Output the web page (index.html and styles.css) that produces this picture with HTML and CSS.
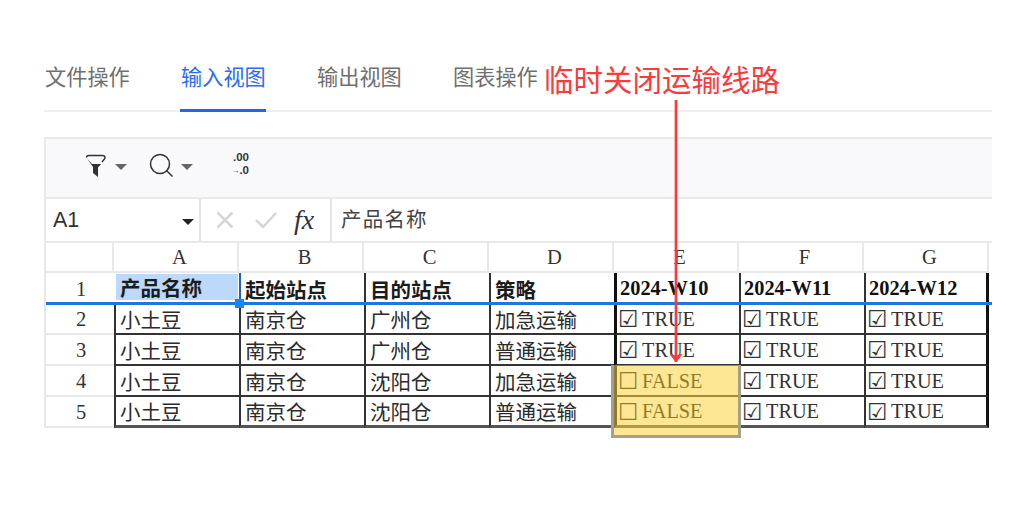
FILE: index.html
```html
<!DOCTYPE html>
<html lang="zh">
<head>
<meta charset="utf-8">
<title>输入视图</title>
<link rel="stylesheet" href="styles.css">
</head>
<body>
<main class="page">
  <nav class="tabs">
    <span class="tab">文件操作</span>
    <span class="tab active">输入视图</span>
    <span class="tab">输出视图</span>
    <span class="tab">图表操作</span>
  </nav>
  <section class="sheet">
    <div class="toolbar">
      <svg class="ico" width="22" height="24" viewBox="0 0 22 24"><path d="M1.500 3.500C1.500 2 2.500 1.500 4 1.500h13c1.500 0 3 .5 3 2 0 1.500-1.500 2.500-3 4.500" fill="none" stroke="#333" stroke-width="1.500"/><path d="M2 4.500c1.500 1.500 3 3.500 5 5.500h9l-3 3.500V23l-5-4v-6z" fill="#333"/></svg>
      <span class="caret"></span>
      <svg class="ico search" width="25" height="25" viewBox="0 0 25 25"><circle cx="11" cy="11" r="9.500" fill="none" stroke="#333" stroke-width="1.500"/><path d="M17.500 17.500l6 6" stroke="#333" stroke-width="1.500"/></svg>
      <span class="caret"></span>
      <div class="decimals"><span class="dec">.00</span><span class="dec"><i class="arrow">→</i>.0</span></div>
    </div>
    <div class="formula">
      <div class="namebox"><span>A1</span><span class="caret dark"></span></div>
      <div class="actions">
        <svg width="18" height="18" viewBox="0 0 18 18"><path d="M1.500 1.500l15 15M16.500 1.500l-15 15" stroke="#d6d6d6" stroke-width="2.500"/></svg>
        <svg width="22" height="18" viewBox="0 0 22 18"><path d="M1 9l7 7L21 2" fill="none" stroke="#d6d6d6" stroke-width="2.500"/></svg>
        <span class="fx">fx</span>
      </div>
      <div class="input">产品名称</div>
    </div>
    <div class="grid">
      <div class="hd corner"></div><div class="hd">A</div><div class="hd">B</div><div class="hd">C</div><div class="hd">D</div><div class="hd">E</div><div class="hd">F</div><div class="hd">G</div>

      <div class="rh first">1</div>
      <div class="c b first sel"><span class="fill">产品名称</span></div><div class="c b first">起始站点</div><div class="c b first">目的站点</div><div class="c b first">策略</div>
      <div class="c d first thick">2024-W10</div><div class="c d first">2024-W11</div><div class="c d first end">2024-W12</div>

      <div class="rh">2</div>
      <div class="c">小土豆</div><div class="c">南京仓</div><div class="c">广州仓</div><div class="c">加急运输</div>
      <div class="c v thick"><i class="box">☑</i>TRUE</div><div class="c v"><i class="box">☑</i>TRUE</div><div class="c v end"><i class="box">☑</i>TRUE</div>

      <div class="rh">3</div>
      <div class="c">小土豆</div><div class="c">南京仓</div><div class="c">广州仓</div><div class="c">普通运输</div>
      <div class="c v thick"><i class="box">☑</i>TRUE</div><div class="c v"><i class="box">☑</i>TRUE</div><div class="c v end"><i class="box">☑</i>TRUE</div>

      <div class="rh">4</div>
      <div class="c">小土豆</div><div class="c">南京仓</div><div class="c">沈阳仓</div><div class="c">加急运输</div>
      <div class="c v thick off"><i class="box">☐</i>FALSE</div><div class="c v"><i class="box">☑</i>TRUE</div><div class="c v end"><i class="box">☑</i>TRUE</div>

      <div class="rh">5</div>
      <div class="c last">小土豆</div><div class="c last">南京仓</div><div class="c last">沈阳仓</div><div class="c last">普通运输</div>
      <div class="c v thick last off"><i class="box">☐</i>FALSE</div><div class="c v last"><i class="box">☑</i>TRUE</div><div class="c v end last"><i class="box">☑</i>TRUE</div>
    </div>
  </section>
  <div class="rowline"></div>
  <div class="handle"></div>
  <div class="highlight"></div>
  <div class="note">临时关闭运输线路</div>
  <svg class="pointer" width="16" height="266" viewBox="0 0 16 266"><path d="M8 0V262" stroke="#fb3b3b" stroke-width="2.700"/><path d="M2 254l6 8 6-8-6 3z" fill="#fb3b3b" stroke="#fb3b3b" stroke-width="1"/></svg>
</main>
</body>
</html>
```
FILE: styles.css
```css
* { box-sizing: border-box; }
html, body { margin: 0; height: 100%; background: #fff; }
body { font-family: "Noto Sans CJK SC", "Noto Sans", sans-serif; overflow: hidden; }
.page { position: relative; width: 1036px; height: 522px; padding: 0 44px; }

.tabs { display: flex; gap: 51px; height: 112px; padding: 59px 0 0 1px; border-bottom: 2px solid #efefef; }
.tab { width: 85px; height: 53px; font-size: 21.200px; line-height: 34px; color: #6f6f6f; white-space: nowrap; }
.tab.active { color: #2b6cf6; border-bottom: 3px solid #2563eb; margin-bottom: -2px; margin-left: -1px; width: 86px; padding-left: 1px; }

.sheet { margin-top: 25px; }
.toolbar { display: flex; align-items: center; height: 62px; padding: 0 0 5px 39px; background: #f9f9fb; border: 2px solid #e9e9e9; border-right: 0; }
.ico { display: block; margin-right: 8px; }
.search { margin-left: 22px; margin-right: 7px; }
.caret { display: block; width: 0; height: 0; border: 6px solid transparent; border-top: 6px solid #666; border-bottom: 0; margin-top: 3px; }
.caret.dark { border-top-color: #222; }
.decimals { display: flex; flex-direction: column; align-items: flex-end; width: 20px; margin: -4px 0 0 36px; color: #333; }
.dec { display: flex; align-items: center; height: 13px; font: 700 11.500px/13px "Liberation Sans", sans-serif; }
.arrow { font: 700 8px/13px "Liberation Sans", sans-serif; }

.formula { display: flex; height: 44px; border-left: 2px solid #e9e9e9; border-bottom: 2px solid #e9e9e9; }
.namebox { display: flex; align-items: center; justify-content: space-between; width: 155px; padding: 0 5px 0 7px; border-right: 2px solid #e4e4e4; font: 21.500px "Liberation Sans", sans-serif; color: #333; }
.actions { display: flex; align-items: center; gap: 21px; width: 131px; padding-left: 15px; border-right: 2px solid #e4e4e4; }
.fx { font: italic 28px "Liberation Serif", serif; color: #333; margin-left: -4px; }
.input { padding: 0 0 0 9px; font-size: 20.500px; line-height: 38px; color: #444; letter-spacing: 1.200px; }

.grid { display: grid; grid-template-columns: 70px repeat(7, 125px); grid-template-rows: 30px repeat(5, 31px); font-family: "Liberation Serif", "Noto Sans CJK SC", serif; width: 945px; }
.hd { display: flex; align-items: center; justify-content: center; padding-left: 8px; border-right: 2px solid #e8e8e8; border-bottom: 2px solid #e8e8e8; font-size: 20.500px; color: #333; }
.corner { border-left: 2px solid #e8e8e8; }
.rh { display: flex; align-items: center; justify-content: center; padding: 2px 0 0 2px; border-left: 2px solid #e8e8e8; border-bottom: 2px solid #e8e8e8; font-size: 20.500px; color: #333; }
.rh.first { padding-top: 4px; }
.c { display: flex; align-items: center; padding-left: 4px; border-left: 2px solid #333; border-bottom: 2px solid #333; font-family: "Noto Sans CJK SC", sans-serif; font-size: 20.500px; line-height: 24px; color: #2c2c2c; white-space: nowrap; }
.c.first { padding-top: 3px; }
.c.last { border-bottom: 3px solid #555; }
.c.b { font-weight: 700; color: #1c1c1c; }
.c.d { font: 700 20.400px "Liberation Serif", serif; color: #111; padding-left: 3px; padding-bottom: 1px; }
.c.v { font: 20.300px "Liberation Serif", serif; color: #333; padding-left: 1px; padding-top: 1px; }
.c.off, .c.off .box { color: #111; }
.c.thick { border-left: 3px solid #111; }
.c.end { border-right: 3px solid #111; }
.c.sel { padding: 2px 1px 3px 2px; border-left: 0; border-bottom-color: transparent; }
.sel + .c { border-left-color: #1f5fbf; }
.fill { display: flex; align-items: center; width: 100%; height: 26px; background: #bcd8fb; padding-left: 4px; }

.box { display: block; flex: none; width: 24px; font: normal 23px/24px "DejaVu Sans", sans-serif; color: #333; }

.rowline { position: absolute; left: 46px; top: 302px; width: 946px; height: 2.500px; background: #1f76e0; }
.handle { position: absolute; left: 235px; top: 299px; width: 9px; height: 9px; background: #1a86f5; }
.highlight { position: absolute; left: 611px; top: 365px; width: 130px; height: 73px; background: rgba(251, 209, 60, .55); border: 3px solid #a3a08e; border-top: 0; }
.note { position: absolute; left: 544px; top: 57px; font-size: 29.500px; line-height: 42px; color: #fb3b3b; white-space: nowrap; }
.pointer { position: absolute; left: 668px; top: 100px; }
```
